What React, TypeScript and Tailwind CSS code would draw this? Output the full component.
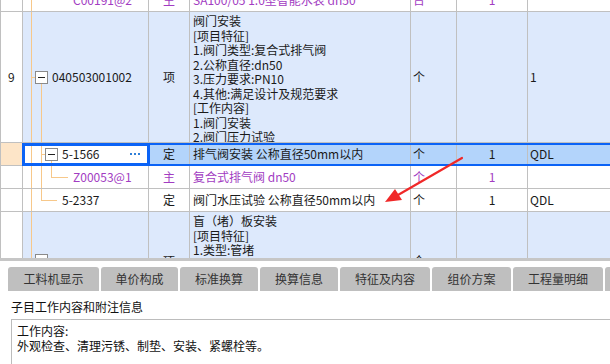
import React from 'react';

const font = { fontFamily: '"Noto Sans CJK SC", "Noto Sans", sans-serif' };

const line = 'border-r border-[#c0c0c0]';
const purple = 'text-[#a23cc2]';

const MinusBox: React.FC<{ className?: string }> = ({ className = '' }) => (
  <span
    className={`absolute w-[13px] h-[13px] border border-[#8a8a8a] bg-white flex items-center justify-center ${className}`}
  >
    <span className="block w-[7px] h-px bg-[#222]" />
  </span>
);

const VLine: React.FC<{ className: string }> = ({ className }) => (
  <span className={`absolute w-px bg-[#f7c88a] ${className}`} />
);
const HLine: React.FC<{ className: string }> = ({ className }) => (
  <span className={`absolute h-px bg-[#f7c88a] ${className}`} />
);

const App: React.FC = () => {
  return (
    <div className="w-[610px] h-[364px] bg-white overflow-hidden text-[12px] text-[#1a1a1a] relative" style={font}>
      {/* Grid */}
      <div className="h-[258px] overflow-hidden border-l border-[#c0c0c0] relative">
        {/* top clipped row */}
        <div className="flex h-[23px] -mt-[11px] border-b border-[#c0c0c0] leading-[22px] bg-white">
          <div className={`w-[22px] ${line}`} />
          <div className={`w-[126px] ${line} relative ${purple} pl-[50px]`}>
            <VLine className="left-[8px] top-0 bottom-0" />
            C00191@2
          </div>
          <div className={`w-[41px] ${line} text-center ${purple}`}>主</div>
          <div className={`w-[221px] ${line} pl-[3px] ${purple} whitespace-nowrap overflow-hidden`}>SA100/05 1:0型智能水表 dn50</div>
          <div className={`w-[46px] ${line} pl-[2px] ${purple}`}>台</div>
          <div className={`w-[71px] ${line} text-center ${purple}`}>1</div>
          <div className="flex-1" />
        </div>

        {/* row 9 */}
        <div className="flex h-[131px] border-b border-[#c0c0c0] bg-[#dde9fc]">
          <div className={`w-[22px] ${line} bg-white flex items-center pl-[7px]`}>9</div>
          <div className={`w-[126px] ${line} relative flex items-center pl-[29px]`}>
            <VLine className="left-[8px] top-0 bottom-0" />
            <HLine className="left-[8px] w-[4px] top-[65px]" />
            <MinusBox className="left-[12px] top-[59px]" />
            <VLine className="left-[18px] top-[72px] bottom-0" />
            040503001002
          </div>
          <div className={`w-[41px] ${line} flex items-center justify-center`}>项</div>
          <div className={`w-[221px] ${line} pl-[3px] pt-[2px] leading-[14.5px] whitespace-nowrap overflow-hidden`}>
            <div>阀门安装</div>
            <div>[项目特征]</div>
            <div>1.阀门类型:复合式排气阀</div>
            <div>2.公称直径:dn50</div>
            <div>3.压力要求:PN10</div>
            <div>4.其他:满足设计及规范要求</div>
            <div>[工作内容]</div>
            <div>1.阀门安装</div>
            <div>2.阀门压力试验</div>
          </div>
          <div className={`w-[46px] ${line} flex items-center pl-[2px]`}>个</div>
          <div className={`w-[71px] ${line}`} />
          <div className="flex-1 flex items-center pl-[2px]">1</div>
        </div>

        {/* row 5-1566 selected */}
        <div className="flex h-[23px] leading-[22px] relative">
          <div className={`w-[22px] ${line} border-b bg-[#fde5c8]`} />
          <div className={`w-[126px] ${line} relative bg-white pl-[39px]`}>
            <VLine className="left-[8px] top-0 bottom-0" />
            <VLine className="left-[18px] top-0 bottom-0" />
            <HLine className="left-[18px] w-[4px] top-[11px]" />
            <MinusBox className="left-[22px] top-[5px]" />
            <VLine className="left-[28px] top-[18px] bottom-0" />
            5-1566
            <span className="absolute left-[107px] top-[10px] flex gap-[2px]">
              <span className="w-[2px] h-[2px] bg-[#2f7fd8]" />
              <span className="w-[2px] h-[2px] bg-[#2f7fd8]" />
              <span className="w-[2px] h-[2px] bg-[#2f7fd8]" />
            </span>
          </div>
          <div className={`w-[41px] ${line} bg-[#b3d4fb] text-center`}>定</div>
          <div className={`w-[221px] ${line} bg-[#b3d4fb] pl-[3px] whitespace-nowrap overflow-hidden`}>排气阀安装 公称直径50mm以内</div>
          <div className={`w-[46px] ${line} bg-[#b3d4fb] pl-[2px]`}>个</div>
          <div className={`w-[71px] ${line} bg-[#b3d4fb] text-center`}>1</div>
          <div className="flex-1 bg-[#b3d4fb] pl-[2px]">QDL</div>
          <span className="absolute left-[21px] right-0 top-0 h-[2px] bg-[#0b63f6]" />
          <span className="absolute left-[21px] right-0 bottom-0 h-[2px] bg-[#0b63f6]" />
          <span className="absolute left-[21px] w-[128px] top-0 bottom-0 border-[3px] border-[#0b63f6]" />
        </div>

        {/* row Z00053@1 */}
        <div className="flex h-[23px] border-b border-[#c0c0c0] leading-[22px] bg-white">
          <div className={`w-[22px] ${line}`} />
          <div className={`w-[126px] ${line} relative pl-[50px] ${purple}`}>
            <VLine className="left-[8px] top-0 bottom-0" />
            <VLine className="left-[18px] top-0 bottom-0" />
            <VLine className="left-[28px] top-0 h-[11px]" />
            <HLine className="left-[28px] w-[17px] top-[11px]" />
            Z00053@1
          </div>
          <div className={`w-[41px] ${line} text-center ${purple}`}>主</div>
          <div className={`w-[221px] ${line} pl-[3px] ${purple}`}>复合式排气阀 dn50</div>
          <div className={`w-[46px] ${line} pl-[2px] ${purple}`}>个</div>
          <div className={`w-[71px] ${line} text-center ${purple}`}>1</div>
          <div className="flex-1" />
        </div>

        {/* row 5-2337 */}
        <div className="flex h-[23px] border-b border-[#c0c0c0] leading-[22px] bg-white">
          <div className={`w-[22px] ${line}`} />
          <div className={`w-[126px] ${line} relative pl-[39px]`}>
            <VLine className="left-[8px] top-0 bottom-0" />
            <VLine className="left-[18px] top-0 h-[11px]" />
            <HLine className="left-[18px] w-[16px] top-[11px]" />
            5-2337
          </div>
          <div className={`w-[41px] ${line} text-center`}>定</div>
          <div className={`w-[221px] ${line} pl-[3px] whitespace-nowrap overflow-hidden`}>阀门水压试验 公称直径50mm以内</div>
          <div className={`w-[46px] ${line} pl-[2px]`}>个</div>
          <div className={`w-[71px] ${line} text-center`}>1</div>
          <div className="flex-1 pl-[2px]">QDL</div>
        </div>

        {/* next item row (clipped) */}
        <div className="flex h-[131px] bg-[#dde9fc]">
          <div className={`w-[22px] ${line} bg-white`} />
          <div className={`w-[126px] ${line} relative`}>
            <VLine className="left-[8px] top-0 bottom-0" />
            <MinusBox className="left-[12px] top-[42px]" />
          </div>
          <div className={`w-[41px] ${line} text-center pt-[40px]`}>项</div>
          <div className={`w-[221px] ${line} pl-[3px] pt-[2px] leading-[14.5px] whitespace-nowrap overflow-hidden`}>
            <div>盲（堵）板安装</div>
            <div>[项目特征]</div>
            <div>1.类型:管堵</div>
            <div>2.型号、规格:dn50</div>
          </div>
          <div className={`w-[46px] ${line} pl-[2px] pt-[40px]`}>个</div>
          <div className={`w-[71px] ${line}`} />
          <div className="flex-1" />
        </div>
      </div>

      {/* splitter */}
      <div className="h-[3px] bg-[#c6c6c6]" />

      {/* tabs */}
      <div className="flex gap-[2px] pl-[8px] pt-[6px] h-[33px]">
        {[
          ['工料机显示', 'w-[91px]'],
          ['单价构成', 'w-[77px]'],
          ['标准换算', 'w-[78px]'],
          ['换算信息', 'w-[78px]'],
          ['特征及内容', 'w-[90px]'],
          ['组价方案', 'w-[79px]'],
          ['工程量明细', 'w-[90px]'],
          ['', 'w-[20px]'],
        ].map(([label, w], i) => (
          <div
            key={i}
            className={`${w} shrink-0 h-[24px] rounded-t-[3px] bg-[#bfbfbf] text-[#333] flex items-center justify-center text-[12px]`}
          >
            {label}
          </div>
        ))}
      </div>

      {/* detail panel */}
      <div className="pl-[11px]">
        <div className="leading-[14px] h-[22px] pt-[6px] text-[#111]">子目工作内容和附注信息</div>
        <div className="mt-[3px] border-t border-l border-[#bcbcbc] h-[60px] pl-[5px] pt-[3px] leading-[15px] text-[#111]">
          <div>工作内容:</div>
          <div>外观检查、清理污锈、制垫、安装、紧螺栓等。</div>
        </div>
      </div>

      {/* red annotation arrow */}
      <svg className="absolute left-0 top-0 pointer-events-none" width="610" height="364">
        <line x1="462" y1="158" x2="398" y2="195" stroke="#f02828" strokeWidth="2.2" strokeLinecap="round" />
        <polygon points="385,202 395,189 402,200" fill="#f02828" />
      </svg>
    </div>
  );
};

export default App;
